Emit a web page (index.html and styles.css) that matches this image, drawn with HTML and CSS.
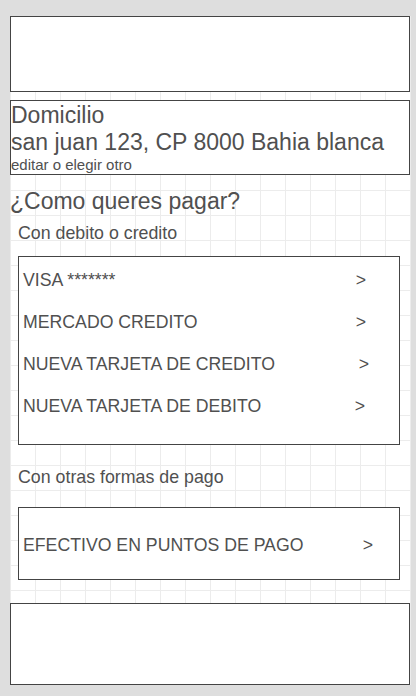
FILE: index.html
```html
<!DOCTYPE html>
<html lang="es">
<head>
<meta charset="utf-8">
<title>Checkout</title>
<link rel="stylesheet" href="styles.css">
</head>
<body>
<div class="screen">
  <div class="box header"></div>

  <div class="box address">
    <div class="address-title">Domicilio</div>
    <div class="address-line">san juan 123, CP 8000 Bahia blanca</div>
    <div class="address-edit">editar o elegir otro</div>
  </div>

  <h1 class="title">¿Como queres pagar?</h1>

  <div class="section-label">Con debito o credito</div>
  <div class="box options">
    <div class="option option-a"><span>VISA *******</span><span class="arrow">&gt;</span></div>
    <div class="option option-a"><span>MERCADO CREDITO</span><span class="arrow">&gt;</span></div>
    <div class="option option-b"><span>NUEVA TARJETA DE CREDITO</span><span class="arrow">&gt;</span></div>
    <div class="option option-c"><span>NUEVA TARJETA DE DEBITO</span><span class="arrow">&gt;</span></div>
  </div>

  <div class="section-label section-label-other">Con otras formas de pago</div>
  <div class="box options options-cash">
    <div class="option option-d"><span>EFECTIVO EN PUNTOS DE PAGO</span><span class="arrow">&gt;</span></div>
  </div>

  <div class="box footer"></div>
</div>
</body>
</html>
```

FILE: styles.css
```css
html, body {
  margin: 0;
  padding: 0;
}

body {
  background: #dedede;
  font-family: "Liberation Sans", Arial, sans-serif;
  color: #505050;
  padding-top: 16px;
}

.screen {
  width: 401px;
  height: 669px;
  margin-left: 10px;
  display: flex;
  flex-direction: column;
  background-color: #ffffff;
  background-image:
    linear-gradient(to right, #ececec 1px, transparent 1px),
    linear-gradient(to bottom, transparent 24px, #ececec 24px);
  background-size: 25px 25px, 25px 25px;
  background-position: 0 0, 0 0;
}

.box {
  box-sizing: border-box;
  border: 1px solid #444444;
  background: #ffffff;
}

.header {
  width: 400px;
  height: 76px;
}

.address {
  width: 400px;
  height: 75px;
  margin-top: 8px;
}

.address-title,
.address-line {
  font-size: 23px;
  line-height: 27px;
  white-space: nowrap;
}

.address-title {
  line-height: 28px;
}

.address-edit {
  font-size: 15px;
  line-height: 18px;
}

.title {
  margin: 13px 0 0 0;
  font-size: 23px;
  line-height: 27px;
  font-weight: normal;
}

.section-label {
  margin-top: 7px;
  padding-left: 8px;
  font-size: 17.8px;
  line-height: 22px;
}

.section-label-other {
  margin-top: 21px;
}

.options {
  width: 382px;
  margin-left: 8px;
  margin-top: 12px;
  padding: 2px 0 17px 4px;
}

.option {
  display: flex;
  justify-content: space-between;
  font-size: 17.7px;
  line-height: 42px;
  white-space: nowrap;
}

.option-a { padding-right: 33px; }
.option-b { padding-right: 30px; }
.option-c { padding-right: 34px; }
.option-d { padding-right: 26px; line-height: 22px; }

.options-cash {
  margin-top: 19px;
  padding: 26px 0 23px 4px;
}

.footer {
  width: 400px;
  height: 82px;
  margin-top: 23px;
}
```
